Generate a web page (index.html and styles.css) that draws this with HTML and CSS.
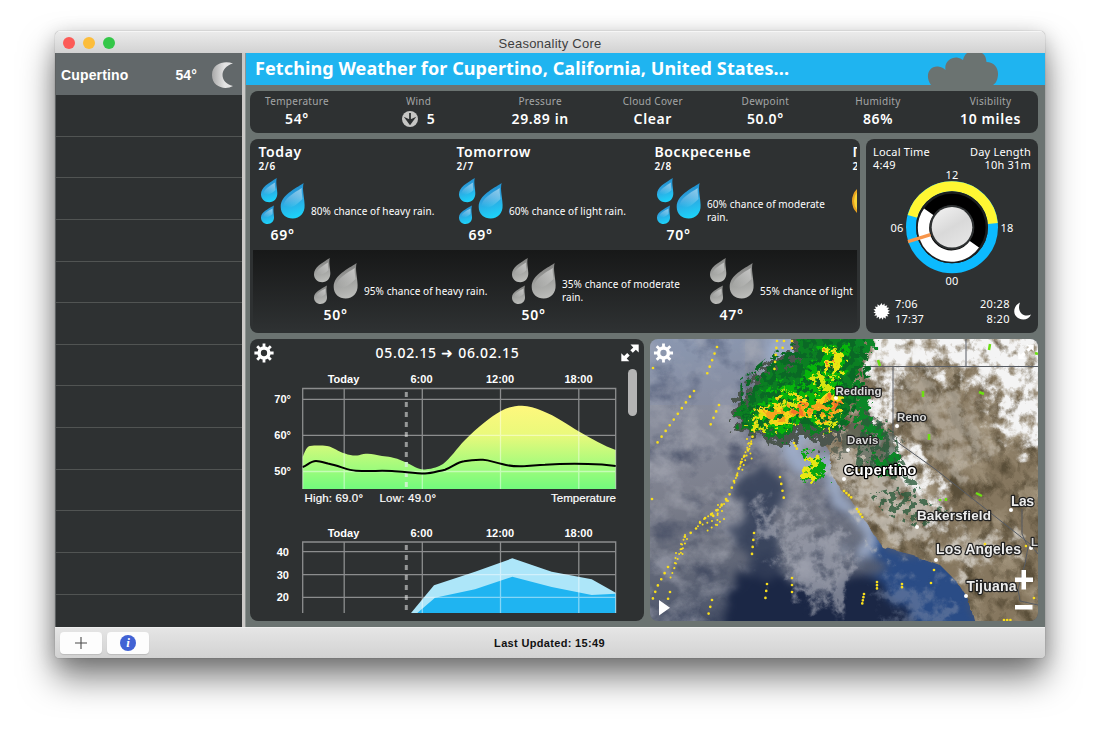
FILE: index.html
```html
<!DOCTYPE html>
<html lang="en">
<head>
<meta charset="utf-8">
<title>Seasonality Core</title>
<link rel="stylesheet" href="styles.css">
</head>
<body>
<svg class="defs" width="0" height="0" aria-hidden="true">
  <defs>
    <linearGradient id="blueDrop" x1="0.3" y1="0" x2="0.5" y2="1"><stop offset="0" stop-color="#1a8ccc"/><stop offset="0.45" stop-color="#2ea2de"/><stop offset="1" stop-color="#1cd3fa"/></linearGradient>
    <linearGradient id="grayDrop" x1="0.3" y1="0" x2="0.5" y2="1"><stop offset="0" stop-color="#7c7c7b"/><stop offset="0.5" stop-color="#9d9e9c"/><stop offset="1" stop-color="#bcbdba"/></linearGradient>
    <linearGradient id="shine" x1="0.700" y1="0" x2="0.4" y2="1"><stop offset="0" stop-color="#fff" stop-opacity="0.480"/><stop offset="1" stop-color="#fff" stop-opacity="0"/></linearGradient>
    <symbol id="rain" viewBox="0 0 46 48">
      <path d="M16.800 1C9 6 1 10 1 17.300C1 22 4.500 25.300 9.300 25.300C14 25.300 17.500 21.500 17.300 16C17.100 10 15.600 6 16.800 1Z"/>
      <path d="M43.600 6C35 12 20.700 18 20.700 30C20.700 37 26 41.500 32.700 41.500C40 41.500 45 36 44.600 28C44.300 19 42 13 43.600 6Z"/>
      <path d="M13.900 28.500C8 32 1 35 1 40.500C1 44.500 4 47 7.500 47C11.500 47 14.200 44 14 40C13.800 36 13 33 13.900 28.500Z"/>
      <path fill="url(#shine)" d="M15 5.500C10 9 3.500 12 3 18C6 19 12 17 15.500 13C15.200 10 14.500 8 15 5.500Z"/><path fill="url(#shine)" d="M41.800 11C34 16 23.500 21 23 31C29 33 37 28 42.500 22C42 17 41.300 14 41.800 11Z"/><path fill="url(#shine)" d="M12.500 31.500C8 34 3.500 36 2.800 40.500C6 41.500 9.500 40 12.500 37Z"/>
    </symbol>
    <symbol id="gear" viewBox="0 0 20 20">
      <g stroke="#fff" stroke-width="2.800" fill="none"><path d="M10 .4V5M10 15V19.600M.4 10H5M15 10H19.600M3.200 3.200L6 6M14 14L16.800 16.800M3.200 16.800L6 14M14 6L16.800 3.200"/><circle cx="10" cy="10" r="4.900" stroke-width="3.500"/></g>
    </symbol>
    <symbol id="expand" viewBox="0 0 18 18">
      <path fill="#fff" d="M9.500 .5H17.700V8.500L14.800 5.800L11.800 8.700L9.300 6.300L12.300 3.400ZM.3 9.300L3.100 12L6.200 9L8.700 11.500L5.700 14.500L8.300 17.200H.3Z"/>
    </symbol>
  </defs>
</svg>

<div class="window">
  <header class="titlebar">
    <div class="lights"><i class="light close"></i><i class="light minimize"></i><i class="light zoom"></i></div>
    <span class="title">Seasonality Core</span>
  </header>

  <div class="body">
    <aside class="sidebar">
      <div class="location active">
        <span class="name">Cupertino</span><span class="temp">54°</span>
        <svg class="moon" viewBox="0 0 22 26"><defs><linearGradient id="moonFill"><stop offset="0" stop-color="#a9a9a9"/><stop offset="0.600" stop-color="#e4e4e4"/></linearGradient></defs><path fill="url(#moonFill)" d="M21 1.500C13 -1.500 0 1 0 13C0 25 13 28.500 21 24C14 22 10.500 18 10.500 13C10.500 8 14 3.500 21 1.500Z"/></svg>
      </div>
      <div class="location"></div><div class="location"></div><div class="location"></div><div class="location"></div>
      <div class="location"></div><div class="location"></div><div class="location"></div><div class="location"></div>
      <div class="location"></div><div class="location"></div><div class="location"></div><div class="location"></div>
      <div class="location last"></div>
    </aside>

    <main class="main">
      <div class="banner">
        <span>Fetching Weather for Cupertino, California, United States...</span>
        <svg class="cloud" viewBox="0 0 72 32"><path d="M4 32C-3 22 3 12.500 11 13.500Q16 14 18.500 17C17 9 24 4 30 4.500Q34 5 36 7C38 -2 46 -4 52 -1.500C58 1 59 4 59.500 9C67 9 71.500 15 71 22C70.500 28 68 31 66 32Z"/></svg>
      </div>

      <div class="panels">
        <section class="panel stats">
          <div class="stat wide"><span>Temperature</span><b>54°</b></div>
          <div class="stat wide"><span>Wind</span><b class="wind"><svg viewBox="0 0 16 16"><circle cx="8" cy="8" r="8" fill="#c6c6c4"/><path d="M8 2V10M4.500 8L8 12.800L11.500 8L8 9.600Z" stroke="#2e3132" stroke-width="1.800" fill="#2e3132"/></svg>5</b></div>
          <div class="stat"><span>Pressure</span><b>29.89 in</b></div>
          <div class="stat"><span>Cloud Cover</span><b>Clear</b></div>
          <div class="stat"><span>Dewpoint</span><b>50.0°</b></div>
          <div class="stat"><span>Humidity</span><b>86%</b></div>
          <div class="stat"><span>Visibility</span><b>10 miles</b></div>
        </section>

        <div class="row">
          <section class="panel forecast">
            <div class="days">
              <article class="day"><h2>Today</h2><small>2/6</small>
                <div class="cond"><svg class="drops"><use href="#rain"/></svg><p>80% chance of heavy rain.</p></div><strong>69°</strong></article>
              <article class="day"><h2>Tomorrow</h2><small>2/7</small>
                <div class="cond"><svg class="drops"><use href="#rain"/></svg><p>60% chance of light rain.</p></div><strong>69°</strong></article>
              <article class="day"><h2>Воскресенье</h2><small>2/8</small>
                <div class="cond"><svg class="drops"><use href="#rain"/></svg><p>60% chance of moderate rain.</p></div><strong>70°</strong></article>
              <article class="day"><h2>П</h2><small>2</small>
                <div class="cond"><svg class="sun" viewBox="0 0 34 34"><circle cx="17" cy="17" r="16" fill="#f8d236" stroke="#e8a220" stroke-width="2"/></svg></div></article>
            </div>
            <div class="nights">
              <article class="night"><div class="cond"><svg class="drops gray"><use href="#rain"/></svg><p>95% chance of heavy rain.</p></div><strong>50°</strong></article>
              <article class="night"><div class="cond"><svg class="drops gray"><use href="#rain"/></svg><p>35% chance of moderate rain.</p></div><strong>50°</strong></article>
              <article class="night"><div class="cond"><svg class="drops gray"><use href="#rain"/></svg><p class="cut">55% chance of light</p></div><strong>47°</strong></article>
            </div>
          </section>

          <section class="panel clock">
            <div class="clock-row top"><span>Local Time<br>4:49</span><span class="right">Day Length<br>10h 31m</span></div>
            <svg class="dial" viewBox="866 167 171 122">
              <defs><linearGradient id="disc" x1="0.2" y1="0" x2="0.8" y2="1"><stop offset="0" stop-color="#f0f0f0"/><stop offset="0.500" stop-color="#d9d9d9"/><stop offset="1" stop-color="#e6e6e6"/></linearGradient></defs>
              <g fill="none">
                <circle cx="952" cy="227.300" r="41" stroke="#0cbaff" stroke-width="10"/>
                <path d="M912.500 216.300A41 41 0 0 1 992.800 223.400" stroke="#fff733" stroke-width="10"/>
                <circle cx="952" cy="227.300" r="34" stroke="#1b1e1f" stroke-width="4"/>
                <circle cx="952" cy="227.300" r="28" stroke="#000" stroke-width="11.300"/>
                <path d="M928.700 211.800A28 28 0 0 0 974.400 244.200" stroke="#fff" stroke-width="11.300"/>
                <path d="M908 241.600L930.500 234.600" stroke="#f7954a" stroke-width="3.200"/>
              </g>
              <circle cx="952" cy="227.300" r="22" fill="#2e3132"/><circle cx="952" cy="227.300" r="20.300" fill="url(#disc)"/>
              <g class="dial-text"><text x="952" y="179">12</text><text x="897" y="232">06</text><text x="1007" y="232">18</text><text x="952" y="285">00</text></g>
            </svg>
            <div class="clock-row bottom">
              <svg class="glyph" viewBox="0 0 16 16"><path fill="#fff" d="M8 0L9 2.200L10.900 .5L11 2.900L13.500 2L12.700 4.300L15.200 4.500L13.600 6.300L16 7.300L13.800 8.500L15.800 10.100L13.300 10.500L14.400 12.800L12 12.300L12 14.800L10 13.300L9.200 15.700L7.800 13.600L6.100 15.500L5.500 13L3.300 14.300L3.700 11.800L1.200 12L2.700 9.900L.4 9L2.400 7.700L.4 6L2.800 5.500L1.700 3.300L4.200 3.700L4.200 1.200L6.300 2.600Z"/></svg>
              <span>7:06<br>17:37</span><span class="right">20:28<br>8:20</span>
              <svg class="glyph crescent" viewBox="0 0 17 18"><path fill="#fff" d="M6 .5C-1 4 -2 13 5 16.500C10 19 15 17 17 12.500C9 16 2.500 9 6 .5Z"/></svg>
            </div>
          </section>
        </div>

        <div class="row lower">
          <section class="panel charts">
            <div class="chart-head"><svg class="gear"><use href="#gear"/></svg><span>05.02.15 ➜ 06.02.15</span><svg class="expand"><use href="#expand"/></svg></div>
            <div class="chart-scroll">
            <svg class="plots" viewBox="250 366 370 247">
              <defs><linearGradient id="tempFill" gradientUnits="userSpaceOnUse" x1="0" y1="405" x2="0" y2="489"><stop offset="0" stop-color="#fff87d"/><stop offset="0.350" stop-color="#eaf97b"/><stop offset="0.700" stop-color="#a9fb7c"/><stop offset="1" stop-color="#72fb7c"/></linearGradient></defs>
              <path d="M406.300 392V488" class="now"/>
              <path fill="url(#tempFill)" d="M302.700 457C305 451 307 446 310 446C316 445.300 322 445.500 327 446C334 447 338 452 345 453.500C350 455.500 355 456 359 455.300C367 452.500 373 454 382 456C388 456.800 393 456.500 405 462C413 465.500 418 470 425 469.500C434 468.500 438 467 443 464C450 459 457 448 465 440C478 427 490 417 501 411C508 407 515 405.700 522 405.700C529 406 535 408 542 410.700C556 416 568 425 579 431.500C592 439 604 446 615.700 450V489H302.700Z"/>
              <path d="M302.700 489V388.500H615.700V489M302.700 399.300H615.700M302.700 435.300H615.700M302.700 471.500H615.700M344.200 388.500V489M422.300 388.500V489M500.500 388.500V489M578.800 388.500V489" class="grid"/>
              <path d="M406.300 462V488" class="now over"/>
              <path fill="none" stroke="#000" stroke-width="2" d="M302.700 467C307 466 310 461 316 461C320 461 324 462.500 328 463.500C340 466 348 470.500 356 470.700C370 471.300 380 470.500 392 471C402 471.300 415 473.500 425 473.500C432 473.500 438 471 445 469.700C453 467 457 462 464 461.300C470 460 477 459.500 483 459.700C490 460 495 463 502 464C509 466 515 466.500 522 466.300C530 466 537 465 545 464.700C560 463.800 575 463.700 588 464C600 464.200 608 465 615.700 466"/>
              <g class="axis center"><text x="343.500" y="383">Today</text><text x="421.500" y="383">6:00</text><text x="500" y="383">12:00</text><text x="578.500" y="383">18:00</text>
              <text x="343.500" y="537">Today</text><text x="421.500" y="537">6:00</text><text x="500" y="537">12:00</text><text x="578.500" y="537">18:00</text></g>
              <g class="axis end"><text x="291" y="403">70°</text><text x="291" y="439">60°</text><text x="291" y="475">50°</text><text x="289" y="556">40</text><text x="289" y="578.500">30</text><text x="289" y="601">20</text></g>
              <g class="legend"><text x="304.500" y="502" textLength="58.500">High: 69.0°</text><text x="379.500" y="502" textLength="56.500">Low: 49.0°</text><text x="551" y="502" textLength="65">Temperature</text></g>
              <path d="M406.300 545V613" class="now"/>
              <path fill="#ade6f9" d="M411 613L434 585.300L475 571.700L512.300 558.300L551.700 571.700L591.700 579.300L615.700 592.700V613Z"/>
              <path fill="#1fb4f1" d="M417.300 613L435 597.700L475 589.300L512.300 576.700L551.700 587L591.700 595L615.700 593.700V613Z"/>
              <path d="M302.700 613V542H615.700V613M302.700 551.700H615.700M302.700 574.700H615.700M302.700 597.300H615.700M344.200 542V613M422.300 542V613M500.500 542V613M578.800 542V613" class="grid"/>
            </svg>
            <i class="scrollbar"></i>
            </div>
          </section>

          <section class="map">
            <svg viewBox="0 0 388 282">
              <defs>
                <linearGradient id="sea" x1="0" y1="0" x2="0.200" y2="1"><stop offset="0" stop-color="#8e9ab0"/><stop offset="0.230" stop-color="#888d9d"/><stop offset="0.550" stop-color="#7d808d"/><stop offset="0.750" stop-color="#676c7b"/><stop offset="1" stop-color="#4a5369"/></linearGradient>
                <linearGradient id="fadeRight"><stop offset="0.700" stop-color="#fff"/><stop offset="1" stop-color="#fff" stop-opacity="0"/></linearGradient>
                <mask id="westOnly"><rect width="225" height="282" fill="url(#fadeRight)"/></mask>
                <filter id="soft" x="-30%" y="-30%" width="160%" height="160%"><feTurbulence type="fractalNoise" baseFrequency="0.030" numOctaves="5" seed="4" result="n"/><feDisplacementMap in="SourceGraphic" in2="n" scale="50" xChannelSelector="R" yChannelSelector="G"/><feGaussianBlur stdDeviation="4"/></filter>
                <filter id="wisp" x="-20%" y="-20%" width="140%" height="140%"><feGaussianBlur in="SourceGraphic" stdDeviation="4" result="b"/><feTurbulence type="fractalNoise" baseFrequency="0.050" numOctaves="6" seed="8" result="n"/><feDisplacementMap in="b" in2="n" scale="70" xChannelSelector="R" yChannelSelector="G" result="shape"/><feTurbulence type="fractalNoise" baseFrequency="0.080" numOctaves="5" seed="30"/><feColorMatrix values="0 0 0 0 0  0 0 0 0 0  0 0 0 0 0  0 3 0 0 -0.600" result="holes"/><feComposite in="shape" in2="holes" operator="in"/></filter>
                <filter id="haze" x="0" y="0" width="100%" height="100%"><feTurbulence type="fractalNoise" baseFrequency="0.030 0.035" numOctaves="6" seed="21"/><feColorMatrix values="0 0 0 0 0.670  0 0 0 0 0.680  0 0 0 0 0.720  3.200 0 0 0 -1.400"/></filter>
                <filter id="dark" x="0" y="0" width="100%" height="100%"><feTurbulence type="fractalNoise" baseFrequency="0.025 0.030" numOctaves="6" seed="5"/><feColorMatrix values="0 0 0 0 0.170  0 0 0 0 0.210  0 0 0 0 0.320  0 3.500 0 0 -1.750"/></filter>
                <filter id="terrain" x="0" y="0" width="100%" height="100%"><feTurbulence type="fractalNoise" baseFrequency="0.070 0.050" numOctaves="6" seed="3"/><feColorMatrix values="0 0 0 0 0.280  0 0 0 0 0.240  0 0 0 0 0.160  3 0 0 0 -1.300"/><feComposite in2="SourceGraphic" operator="in"/></filter>
                <filter id="sand" x="0" y="0" width="100%" height="100%"><feTurbulence type="fractalNoise" baseFrequency="0.035" numOctaves="6" seed="14"/><feColorMatrix values="0 0 0 0 0.720  0 0 0 0 0.670  0 0 0 0 0.580  0 3 0 0 -1.450"/><feComposite in2="SourceGraphic" operator="in"/></filter>
                <filter id="ragged" x="-20%" y="-20%" width="140%" height="140%"><feTurbulence type="fractalNoise" baseFrequency="0.140" numOctaves="5" seed="11" result="n"/><feDisplacementMap in="SourceGraphic" in2="n" scale="26" xChannelSelector="R" yChannelSelector="G"/></filter>
                <filter id="speckle" x="-10%" y="-10%" width="120%" height="120%"><feTurbulence type="fractalNoise" baseFrequency="0.150" numOctaves="4" seed="6"/><feColorMatrix values="0 0 0 0 0  0 0 0 0 0  0 0 0 0 0  0 20 0 0 -10.300" result="m"/><feComposite in="SourceGraphic" in2="m" operator="in"/></filter>
                <filter id="streak" x="-20%" y="-20%" width="140%" height="140%"><feTurbulence type="fractalNoise" baseFrequency="0.120 0.140" numOctaves="4" seed="19" result="n"/><feDisplacementMap in="SourceGraphic" in2="n" scale="26" xChannelSelector="R" yChannelSelector="G" result="s"/><feColorMatrix in="n" values="0 0 0 0 0  0 0 0 0 0  0 0 0 0 0  0 0 20 0 -8.800" result="m"/><feComposite in="s" in2="m" operator="in"/></filter>
                <filter id="coast"><feTurbulence type="fractalNoise" baseFrequency="0.080" numOctaves="3" result="n"/><feDisplacementMap in="SourceGraphic" in2="n" scale="9"/></filter>
                <path id="landmass" d="M140 -10L148 30L145 60L165 90L178 110L182 135L190 150L200 160L212 177L224 195L232 208L263 216L290 226L307 243L318 260L327 295H400V-10Z"/>
              </defs>
              <rect width="388" height="282" fill="url(#sea)"/>
              <g mask="url(#westOnly)">
                <rect width="225" height="282" filter="url(#dark)" opacity="0.500"/>
                <rect width="225" height="282" filter="url(#haze)" opacity="0.600"/>
              </g>
              <rect width="95" height="66" fill="#7d92b8" opacity="0.180"/>
              <g filter="url(#soft)">
                <path fill="#2a4c86" d="M205 175L255 205L310 225L345 310H235L215 250L235 230Z"/>
                <path fill="#1b2745" d="M75 310L90 240L115 220L150 265L190 250L225 240L250 260L262 310Z"/>
                <path fill="#333e58" opacity="0.850" d="M82 205L100 135L118 130L132 165L125 200L135 225L105 240Z"/>
                <path fill="#9dadca" opacity="0.900" d="M128 0H165L172 50L155 90L190 130L205 170L225 205L215 225L195 190L170 145L140 110L128 60Z"/>
              </g>
              <path filter="url(#wisp)" fill="#a3a6b2" opacity="0.700" d="M110 165Q180 180 200 215Q205 245 175 262Q140 260 130 225Z"/>
              <path filter="url(#wisp)" fill="#8591aa" opacity="0.450" d="M225 245L265 240L300 262L290 290H245Z"/>
              <g filter="url(#coast)">
                <use href="#landmass" fill="#86775f"/>
                <use href="#landmass" filter="url(#sand)" opacity="0.600"/>
                <use href="#landmass" filter="url(#terrain)" opacity="0.700"/>
              </g>
              <g filter="url(#wisp)" fill="#cfcac0">
                <path d="M170 85L225 110L270 160L275 200L245 215L215 180L190 145Z" opacity="0.750"/>
                <path d="M250 30L320 60L345 110L320 140L270 105Z" opacity="0.500"/>
                <path d="M285 205L350 192L365 212L300 235Z" opacity="0.900"/>
              </g>
              <g filter="url(#wisp)" fill="#f4f4f4">
                <path d="M215 -20H275L262 22L245 48L246 90L265 115L298 175L290 190L268 160L240 120L222 70Z"/>
                <path d="M265 -30H440V140L400 130L370 105L345 82L335 48L300 32H270Z"/>
                <path d="M310 -30H440V110L395 95L360 60L330 35Z"/>
              </g>
              <path fill="none" stroke="#565b63" d="M200 27.500H388M316 0V27M243 28V100L285 130L380 205L388 215M372 170V195L378 208L375 225L368 250L370 262L388 266"/>
              <g filter="url(#ragged)">
                <path fill="#4b554d" d="M130 16L104 36L94 55L82 68L88 92L110 97L130 108L152 95L172 108L190 95L202 66L211 25L222 -10H142L142 20Z"/>
                <path fill="#0b7f22" d="M132 22L110 38L102 60L87 72L92 88L114 92L132 100L150 84L166 96L194 86L204 62L210 28L222 -8H147L150 20L138 32Z"/>
                <path fill="#06b50b" d="M125 43L117 58L103 72L100 84L120 88L136 93L154 78L168 86L184 68L194 35L201 5H176L156 28L152 45Z"/>
                <path fill="#4f5b4e" d="M214 68L244 95L252 130L226 134L204 110L184 118L194 95Z" opacity="0.650"/>
                <path fill="#0b8627" d="M207 40L221 56L216 70L224 83L236 92L224 102L206 84ZM221 120L244 116L254 128L230 137ZM200 -8H224L222 12L208 20Z"/>
                <path fill="#08a512" d="M151 113L172 118L176 136L154 142L161 129Z"/>
              </g>
              <path filter="url(#speckle)" fill="#0a6925" d="M90 40L125 12L150 0L215 0L222 35L195 92L150 85L92 90Z"/>
              <g filter="url(#streak)">
                <path fill="#d9e411" d="M123 44L137 53L120 64L106 70L103 88L128 92L145 80L162 72L172 94L188 84L195 66L184 44L164 34L170 56L146 60Z"/>
                <path fill="#e8e713" d="M176 6L196 14L188 42L176 38ZM155 116L168 118L170 138L156 142Z"/>
                <path fill="#f8d61a" d="M104 70L128 62L142 70L150 56L170 58L182 52L195 70L178 88L168 77L148 83L118 88Z"/>
                <path fill="#f5a31f" d="M110 73L130 68L146 65L160 60L168 66L182 58L192 66L178 82L165 73L146 76L124 82Z"/>
                <path fill="#f57426" d="M141 66L156 66L148 76ZM178 60L196 62L186 72ZM178 12L188 18L182 30Z"/>
              </g>
              <path filter="url(#speckle)" fill="#2d5b3c" d="M214 70L246 95L250 116L280 165L300 170L270 190L235 175L218 155L260 145L205 130Z" opacity="0.800"/>
              <path class="wind-trails small-dots" d="M97 100L102 121M99 104L90 128M92 120L84 145M78 162L60 176L48 184M72 172L62 178M74 180L54 194M68 166L67 190M62 182L46 188M35 196L27 222L20 240M37 200L29 218M31 205L33 218M26 214L24 233M106 88L98 112L92 132"/>
              <path class="wind-trails" d="M44 52L5 107M67 8L57 35M69 66L60 87M127 2L124 35M134 2L132 12M142 2V12M105 84L101 105L90 125L86 140M84 142L78 160L65 173L52 181L45 191L30 201M76 160L62 178M18 228L7 248L2 262M20 253L18 260M104 194L102 215M117 245L115 263M142 239V256M62 261L57 281M130 138L134 160M2 160H3M3 29L1 32"/>
              <path class="wind-trails close-dots" d="M194 152L202 159M207 170L213 179M209 131L212 135M227 243V251M214 255L212 266M252 245V250M284 231H285M281 244H282M384 259H385M354 281H363M144 104L148 112M335 205H336M339 215H340M376 207H377"/>
              <path class="green-wind" d="M228 21L230 27M273 52V58M279 95V101M329 53L334 55M340 5L339 11M326 154L332 157M385 14L388 15M290 160V162M296 159V162"/>
              <g fill="#fff"><circle cx="186" cy="59" r="2"/><circle cx="247" cy="87" r="2"/><circle cx="198" cy="111" r="2"/><circle cx="194" cy="140" r="2"/><circle cx="267" cy="188" r="2"/><circle cx="286" cy="221" r="2"/><circle cx="361" cy="171" r="2"/><circle cx="316" cy="257" r="2"/><circle cx="381" cy="209" r="2"/></g>
              <g class="city">
                <text x="185.500" y="56" class="small" textLength="46">Redding</text><text x="247" y="82" class="small" textLength="29.500">Reno</text><text x="197" y="105" class="small" textLength="31.500">Davis</text>
                <text x="193.500" y="136" class="big" textLength="73">Cupertino</text><text x="267" y="181" class="mid" textLength="74">Bakersfield</text><text x="361" y="167" textLength="23">Las</text>
                <text x="286" y="215" textLength="85">Los Angeles</text><text x="381" y="207" class="small">L</text><text x="316.500" y="252" textLength="50">Tijuana</text>
              </g>
              <path fill="#fff" d="M9 261L20 268.800L9 276.500ZM365 238.500H371.500V231H376V238.500H383V243H376V250.500H371.500V243H365ZM365 266H382.500V270.500H365Z"/>
              <svg x="3.500" y="4" width="20" height="20"><use href="#gear"/></svg>
              <svg x="368" y="5" width="16" height="16"><use href="#expand"/></svg>
            </svg>
          </section>
        </div>
      </div>
    </main>
  </div>

  <footer class="footer">
    <button class="btn"><svg viewBox="0 0 12 12"><path d="M6 0V12M0 6H12" stroke="#4a4a4a" stroke-width="1.100"/></svg></button>
    <button class="btn"><span class="info">i</span></button>
    <span class="updated">Last Updated: 15:49</span>
  </footer>
</div>
</body>
</html>
```

FILE: styles.css
```css
* { box-sizing: border-box; }
body { margin: 0; width: 1100px; height: 737px; overflow: hidden; background: #fff; font-family: "Noto Sans", sans-serif; color: #fff; padding: 31px 55px 0; }
.defs { position: absolute; }
svg { display: block; flex: none; }
h2, p { margin: 0; }
filter { color-interpolation-filters: sRGB; }

.window { width: 990px; height: 627px; border-radius: 5px 5px 4px 4px; overflow: hidden; display: flex; flex-direction: column; background: #d8d8d8; box-shadow: 0 20px 34px rgba(0,0,0,.5), 0 4px 20px rgba(0,0,0,.18), 0 0 1px rgba(0,0,0,.5); }
.titlebar { height: 22px; flex: none; display: grid; grid-template-columns: 1fr auto 1fr; align-items: center; background: linear-gradient(#ebebeb, #d2d2d2); border-top: 1px solid #f6f6f6; }
.lights { display: flex; gap: 8px; padding-left: 8px; }
.light { width: 12px; height: 12px; border-radius: 50%; }
.close { background: #fc5b57; }
.minimize { background: #fcbd3a; }
.zoom { background: #34c748; }
.title { color: #3e3e3e; font: 13px/20px "Liberation Sans", sans-serif; letter-spacing: .25px; padding-top: 2px; }

.body { height: 574px; display: flex; flex: none; }
.sidebar { width: 187px; background: #2e3132; border-left: 1px solid #5e6162; display: flex; flex-direction: column; overflow: hidden; }
.location { height: 41.640px; flex: none; border-bottom: 1px solid #515453; }
.location.active { display: flex; align-items: center; padding: 2px 8px 0 5px; background: #62686a; border: 0; font: bold 14px "Liberation Sans", sans-serif; letter-spacing: .15px; height: 42px; }
.location.last { border: 0; }
.location .name { flex: 1; }
.location .temp { margin-right: 15px; }
.moon { width: 22px; height: 26px; }

.main { flex: 1; margin-left: 3px; background: #6b7371; border-left: 1px solid #8f9593; box-shadow: -3px 0 #cbc9c7; }
.banner { height: 32px; background: #1fb4f0; display: flex; justify-content: space-between; align-items: flex-start; padding: 0 46px 0 9px; font-size: 18px; line-height: 31px; font-weight: 700; letter-spacing: .1px; overflow: hidden; white-space: nowrap; }
.cloud { width: 72px; height: 32px; fill: #6b7371; }
.panels { padding: 6px 7px 0 4px; display: flex; flex-direction: column; gap: 6px; }
.panel { background: #2e3132; border-radius: 8px; overflow: hidden; }

.stats { height: 42px; display: flex; gap: 18.600px; }
.stat { width: 94px; flex: none; display: flex; flex-direction: column; align-items: center; padding-top: 4px; }
.stat.wide { margin-right: 9px; }
.stat span { font-size: 10px; line-height: 13px; letter-spacing: .3px; color: #a4a6a6; }
.stat b { font-size: 14px; font-weight: 600; line-height: 22px; letter-spacing: .6px; display: flex; white-space: nowrap; }
.wind { gap: 9px; align-items: center; }
.wind svg { width: 16px; height: 16px; }

.row { display: flex; gap: 6px; height: 194px; }
.forecast { width: 610px; padding: 4px 3px 3px; flex: none; display: flex; flex-direction: column; }
.days, .nights { display: flex; overflow: hidden; padding-left: 5.500px; flex: none; }
.days { height: 107px; }
.nights { height: 80px; padding-left: 58.500px; padding-top: 7px; background: linear-gradient(#171818, #2e3132); }
.day, .night { width: 198px; flex: none; }
.day h2 { font-size: 14px; font-weight: 600; line-height: 18px; letter-spacing: .6px; white-space: nowrap; }
.day small { display: block; font-size: 10px; line-height: 11px; letter-spacing: .6px; font-weight: 600; }
.cond { display: flex; gap: 5px; height: 48px; align-items: center; padding-left: 1.500px; }
.day .cond { margin-top: 5px; }
.cond p { font-size: 10px; line-height: 13px; letter-spacing: .08px; width: 126px; padding-top: 20px; }
.cond p.cut { white-space: nowrap; }
.drops { width: 46px; height: 48px; fill: url(#blueDrop); }
.gray { fill: url(#grayDrop); }
.sun { width: 34px; height: 34px; margin-left: -2px; }
.day strong, .night strong { display: block; width: 48px; font-size: 14px; font-weight: 600; line-height: 20px; letter-spacing: .75px; text-align: center; }

.clock { flex: 1; display: flex; flex-direction: column; padding: 6px 7px; }
.clock-row { display: flex; font-size: 11px; line-height: 14px; letter-spacing: .2px; justify-content: space-between; }
.clock-row.top { line-height: 13px; }
.right { text-align: right; }
.dial { width: 171px; height: 122px; margin: -4px -7px 0; }
.dial-text { font-size: 11px; letter-spacing: .3px; fill: #fff; text-anchor: middle; }
.bottom { align-items: center; margin-top: 7px; line-height: 15px; }
.bottom .right { margin-left: auto; letter-spacing: .4px; }
.glyph { width: 17px; height: 17px; margin: 0 5px 0 0; }
.crescent { width: 17px; height: 18px; margin: 0 0 0 4px; }

.lower { height: 282px; }
.charts { width: 394px; flex: none; }
.chart-head { height: 27px; padding: 4px 5px 0 4px; display: flex; justify-content: space-between; font-size: 14px; letter-spacing: .7px; line-height: 20px; font-weight: 500; }
.gear { width: 20px; height: 20px; }
.expand { width: 18px; height: 18px; margin-top: 1px; }
.chart-scroll { display: flex; gap: 8px; }
.plots { width: 370px; height: 247px; }
.scrollbar { width: 9px; height: 47px; border-radius: 5px; background: #b4b4b4; margin-top: 3px; }
.plots text { font-family: "Liberation Sans", sans-serif; fill: #fff; font-size: 11px; }
.plots .legend text { font-size: 11.500px; stroke: #fff; stroke-width: .2px; }
.axis text { font-weight: bold; }
.center { text-anchor: middle; }
.end { text-anchor: end; }
.now { stroke: #969898; stroke-width: 3; stroke-dasharray: 5 5; fill: none; }
.now.over { stroke: #cdf3cc; }
.grid { fill: none; stroke: #fff; stroke-opacity: .45; stroke-width: 1.300; }

.map { width: 388px; height: 282px; border-radius: 8px; overflow: hidden; }
.map > svg { width: 388px; height: 282px; }
.wind-trails { fill: none; stroke: #f8de1c; stroke-width: 2.700; stroke-linecap: round; stroke-dasharray: 0 7; }
.small-dots { stroke-width: 2; stroke-dasharray: 0 5; }
.close-dots { stroke-width: 2.700; stroke-dasharray: 0 3.200; }
.green-wind { fill: none; stroke: #6ddf12; stroke-width: 2.500; }
.city { font: bold 14px "Liberation Sans", sans-serif; fill: #ededed; stroke: #222; stroke-width: 2.500px; paint-order: stroke; stroke-linejoin: round; }
.city .mid { font-size: 13.500px; }
.city .small { font-size: 11.500px; fill: #dadada; }
.city .big { font-size: 15px; fill: #fff; stroke: #000; }

.footer { flex: 1; display: flex; align-items: center; gap: 5px; padding: 0 5px; background: linear-gradient(#e5e5e5, #d2d2d2); border-top: 1px solid #efefef; }
.btn { width: 42px; height: 22px; padding: 0; border: 0; border-radius: 4px; background: #fdfdfd; display: flex; justify-content: center; align-items: center; box-shadow: 0 1px 1px rgba(0,0,0,.12); }
.btn svg { width: 12px; height: 12px; }
.info { width: 16px; height: 16px; border-radius: 50%; background: #4162d4; color: #fff; font: italic bold 13px/16px "Liberation Serif", serif; }
.updated { margin: 0 auto; padding-right: 95px; color: #111; font: bold 11px "Liberation Sans", sans-serif; letter-spacing: .33px; }
```
